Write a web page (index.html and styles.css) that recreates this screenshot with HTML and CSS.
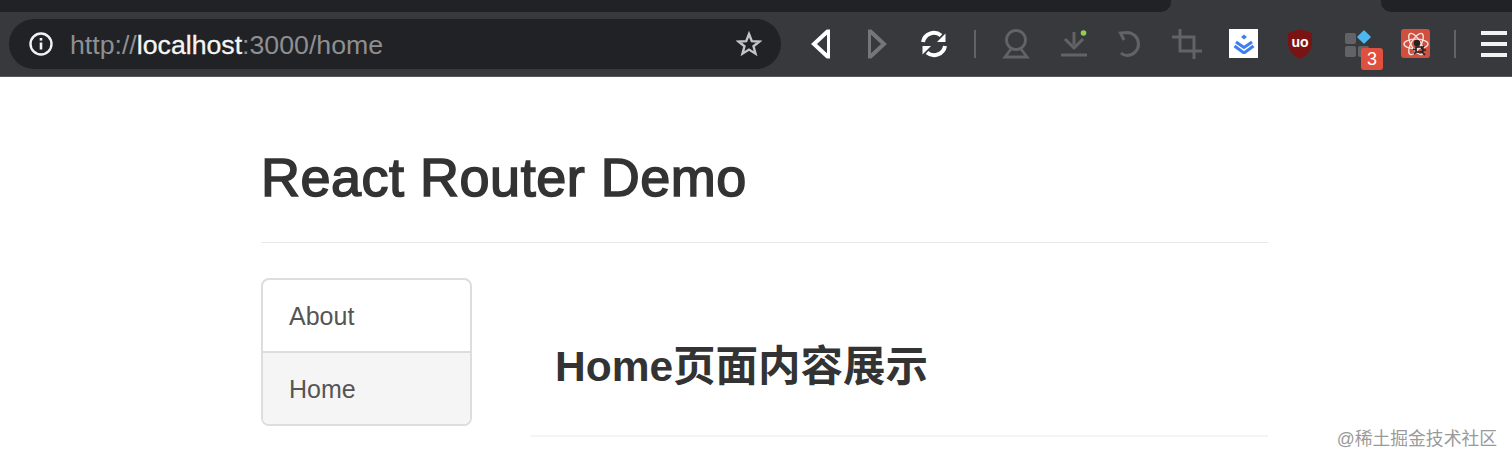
FILE: index.html
```html
<!DOCTYPE html>
<html>
<head>
	<meta charset="utf-8">
	<meta name="viewport" content="width=device-width, initial-scale=1">
	<title>React Router Demo</title>
	<link rel="stylesheet" href="styles.css">
</head>
<body>
	<div class="chrome">
		<div class="tabs">
			<div class="tab-left"></div>
			<div class="tab-right"></div>
		</div>
		<div class="toolbar">
			<div class="urlbar">
				<svg class="info" width="26" height="26" viewBox="0 0 26 26" fill="none" stroke="#f2f2f2" stroke-width="2.4"><circle cx="13" cy="13" r="10.5"/><path d="M13 11.5v7" stroke-width="2.6"/><path d="M13 7v2.6" stroke-width="2.6"/></svg>
				<div class="url">http://<b>localhost</b>:3000/home</div>
				<svg class="star" width="26" height="26" viewBox="0 0 26 26" fill="none" stroke="#c4c4c4" stroke-width="2.4"><path d="M13 3l2.800 7.100 7.600.4-5.900 4.800 2 7.400L13 18.600l-6.500 4.100 2-7.400-5.900-4.800 7.600-.4z"/></svg>
			</div>
			<div class="icons">
				<svg class="ic-back" width="24" height="32" viewBox="0 0 24 32" fill="none" stroke="#fff" stroke-width="4"><path d="M19 3L5 16l14 13"/><path d="M19.500 1.500v29" stroke-width="3"/></svg>
				<svg class="ic-forward" width="24" height="32" viewBox="0 0 24 32" fill="none" stroke="#75767a" stroke-width="4"><path d="M5 3l14 13L5 29"/><path d="M4.500 1.500v29" stroke-width="3"/></svg>
				<svg class="ic-reload" width="30" height="30" viewBox="0 0 30 30" fill="none" stroke="#fff" stroke-width="4"><path d="M4 13A11 11 0 0 1 22 6.500"/><path d="M26 17A11 11 0 0 1 8 23.500"/><path d="M26.500 4.500v8.500h-8.500z" fill="#fff" stroke="none"/><path d="M3.500 25.500v-8.500h8.500z" fill="#fff" stroke="none"/></svg>
				<div class="sep sep-a"></div>
				<svg class="ic-badge" width="28" height="30" viewBox="0 0 28 30" fill="none" stroke="#626367" stroke-width="2.800"><circle cx="14" cy="11" r="9.500"/><path d="M9 20L3 28h22l-6-8"/></svg>
				<svg class="ic-down" width="28" height="30" viewBox="0 0 28 30" fill="none"><path d="M14 3v13" stroke="#626367" stroke-width="3"/><path d="M5 10l9 9 9-9" stroke="#626367" stroke-width="3"/><path d="M1 26h26" stroke="#626367" stroke-width="3"/><circle cx="23.500" cy="4" r="2.800" fill="#8fd14f"/></svg>
				<svg class="ic-undo" width="26" height="30" viewBox="0 0 26 30" fill="none" stroke="#626367" stroke-width="3"><path d="M6 11L2.500 4 9 3.500A11 11 0 0 1 9 26.500 9 9 0 0 1 3 24"/></svg>
				<svg class="ic-crop" width="30" height="30" viewBox="0 0 30 30" fill="none" stroke="#626367" stroke-width="3"><path d="M0 8h22v22"/><path d="M8 0v22h22"/></svg>
				<div class="ic-juejin">
					<svg width="22" height="20" viewBox="0 0 22 20" fill="none" stroke="#3f7ef0" stroke-width="3"><path d="M3 8l8 5.500L19 8"/><path d="M1.500 12l9.500 7 9.500-7"/><path d="M8 3l3 2.500L14 3l-3-2.500z" fill="#3f7ef0" stroke="none"/></svg>
				</div>
				<svg class="ic-ublock" width="26" height="30" viewBox="0 0 26 30"><path d="M13 0L25 4V14C25 22 19 27 13 30 7 27 1 22 1 14V4z" fill="#7a1414"/><text class="ublock-text" x="13" y="18" text-anchor="middle">uo</text></svg>
				<div class="ic-apps">
					<i class="cell cell-a"></i><i class="cell cell-b"></i><i class="cell cell-c"></i><i class="diamond"></i>
					<span class="count">3</span>
				</div>
				<div class="ic-react">
					<svg width="28" height="28" viewBox="0 0 28 28" fill="none" stroke="#f6e3de" stroke-width="1.300"><ellipse cx="14" cy="14" rx="12" ry="4.800"/><ellipse cx="14" cy="14" rx="12" ry="4.800" transform="rotate(60 14 14)"/><ellipse cx="14" cy="14" rx="12" ry="4.800" transform="rotate(120 14 14)"/><circle cx="15" cy="13" r="3.200" fill="#222" stroke="none"/><path d="M14 17h7v5h-7zM11 19l3 1M12 24l3-3M22 16l-3 3M24 20h-4M23 25l-4-4" stroke="#222" stroke-width="1.600"/></svg>
				</div>
				<div class="sep sep-b"></div>
				<div class="menu"><i></i><i></i><i></i></div>
			</div>
		</div>
	</div>
	<div class="container">
		<div class="header">
			<h1>React Router Demo</h1>
		</div>
		<div class="row">
			<div class="list">
				<a class="item">About</a>
				<a class="item active">Home</a>
			</div>
			<div class="content">
				<h2>Home页面内容展示</h2>
			</div>
		</div>
	</div>
	<div class="watermark">@稀土掘金技术社区</div>
</body>
</html>
```
FILE: styles.css
```css
html, body{height: 100%;overflow: hidden;}
body{margin: 0;background-color: #fff;color: #333;font-family: 'Liberation Sans', 'Noto Sans CJK SC', sans-serif;position: relative;}

.chrome{height: 77px;background-color: #38393d;border-bottom: 1px solid #55565a;box-sizing: border-box;}
.tabs{display: flex;justify-content: space-between;height: 12px;}
.tab-left{width: 1171px;background-color: #212226;border-bottom-right-radius: 10px;}
.tab-right{width: 131px;background-color: #212226;border-bottom-left-radius: 10px;}
.toolbar{display: flex;align-items: center;height: 64px;padding: 0 0 0 9px;}
.urlbar{width: 772px;height: 50px;margin-top: -1px;background-color: #212226;border-radius: 25px;display: flex;align-items: center;padding: 0 19px;box-sizing: border-box;}
.urlbar .url{flex: 1;margin-left: 16px;padding-top: 3px;font-size: 26.700px;color: #8e8f91;}
.urlbar .url b{font-weight: normal;color: #f5f5f5;-webkit-text-stroke: 0.3px #f5f5f5;}
.star{margin-left: -1px;}

.icons{display: flex;align-items: center;margin-top: -1px;}
.icons svg, .icons > div{flex: none;}
.ic-back{margin-left: 28px;}
.ic-forward{margin-left: 32px;}
.ic-reload{margin-left: 30px;}
.sep{width: 2px;height: 28px;background-color: #626367;}
.sep-a{margin-left: 25px;}
.ic-badge{margin-left: 26px;}
.ic-down{margin-left: 30px;}
.ic-undo{margin-left: 30px;}
.ic-crop{margin-left: 28px;}
.ic-juejin{margin-left: 27px;width: 29px;height: 29px;background-color: #fff;display: flex;align-items: center;justify-content: center;}
.ic-ublock{margin-left: 29px;}
.ublock-text{font-size: 14px;font-weight: bold;fill: #fff;}
.ic-apps{margin-left: 32px;width: 38px;height: 36px;position: relative;}
.cell{position: absolute;width: 11px;height: 11px;background-color: #626367;border-radius: 2px;}
.cell-a{left: 0;top: 7px;}
.cell-b{left: 0;top: 20px;}
.cell-c{left: 13px;top: 20px;}
.diamond{position: absolute;left: 14px;top: 6px;width: 10px;height: 10px;background-color: #4db8f0;transform: rotate(45deg);border-radius: 1px;}
.count{position: absolute;left: 16px;top: 22px;width: 22px;height: 22px;background-color: #e0503f;color: #fff;border-radius: 3px;font-size: 18px;line-height: 22px;text-align: center;}
.ic-react{margin-left: 18px;width: 29px;height: 29px;background-color: #d0503f;border-radius: 3px;display: flex;align-items: center;justify-content: center;}
.sep-b{margin-left: 24px;}
.menu{margin-left: 25px;width: 26px;display: flex;flex-direction: column;gap: 7px;}
.menu i{display: block;height: 4px;background-color: #f2f2f2;}

.container{width: 1007px;margin-left: 261px;}
.header{height: 165px;border-bottom: 1px solid #e8e8e8;}
h1{margin: 0;padding-top: 70px;font-size: 54px;line-height: 60px;font-weight: normal;letter-spacing: 0.5px;-webkit-text-stroke: 1.6px #333;}
.row{display: flex;margin-top: 35px;}
.list{width: 211px;height: 148px;box-sizing: border-box;border: 2px solid #ddd;border-radius: 8px;overflow: hidden;}
.item{display: block;height: 71px;padding: 1px 0 0 26px;font-size: 25px;line-height: 71px;color: #555;box-sizing: border-box;}
.item.active{background-color: #f5f5f5;border-top: 2px solid #ddd;height: 73px;}
.content{margin-left: 58px;flex: 1;height: 159px;border-bottom: 2px solid #f4f4f4;box-sizing: border-box;}
h2{margin: 0;padding-top: 64px;padding-left: 25px;font-size: 42.5px;line-height: 50px;font-weight: bold;}

.watermark{position: absolute;right: 15px;bottom: 12px;font-size: 17.800px;line-height: 26px;color: #9a9a9a;}
```
